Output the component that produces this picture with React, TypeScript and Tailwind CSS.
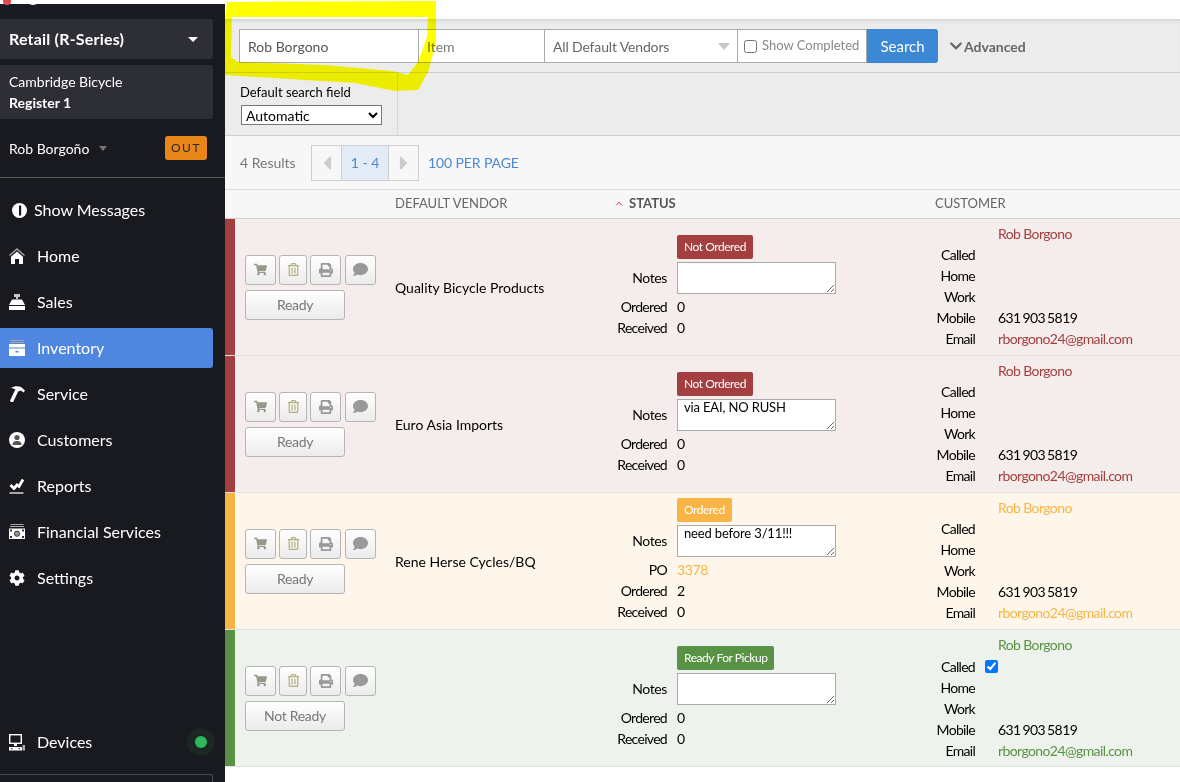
import type { ReactNode } from 'react';
import {
  FaCog, FaShoppingCart, FaRegTrashAlt, FaPrint, FaComment, FaChevronDown, FaCaretLeft, FaCaretRight,
} from 'react-icons/fa';

function HomeIcon() {
  return (
    <svg width="16" height="16" viewBox="0 0 16 16">
      <polyline points="0.5,7.5 8,1 15.5,7.5" fill="none" stroke="#a5a5a5" strokeWidth="1.4" />
      <path fill="#fff" d="M8 3.5 L14 8.8 V16 H10 V11 H6 V16 H2 V8.8 Z" />
    </svg>
  );
}

function SalesIcon() {
  return (
    <svg width="16" height="16" viewBox="0 0 16 16">
      <rect x="5" y="0" width="6" height="3" fill="#c8c8c8" />
      <rect x="7" y="3" width="2" height="2" fill="#c8c8c8" />
      <path fill="#fff" d="M3 5.5 H13 L16 11 H0 Z" />
      <rect x="0" y="12" width="16" height="4" fill="#fff" />
    </svg>
  );
}

function InventoryIcon() {
  return (
    <svg width="16" height="16" viewBox="0 0 16 16">
      <rect x="1.5" y="0" width="13" height="1" fill="#aaa" />
      <rect x="1" y="2" width="14" height="1" fill="#aaa" />
      <rect x="0" y="4" width="16" height="3.5" fill="#fff" />
      <rect x="0" y="8.5" width="16" height="7.5" fill="#fff" />
      <rect x="6.5" y="11" width="3" height="1.5" fill="#4f86e0" />
    </svg>
  );
}

function ServiceIcon() {
  return (
    <svg width="16" height="16" viewBox="0 0 16 16">
      <line x1="3" y1="14.5" x2="7.5" y2="5" stroke="#fff" strokeWidth="3.4" strokeLinecap="round" />
      <path fill="#fff" d="M2 2 C5 0 9 0 12 1 L16 4.5 L14.5 6.5 L12 4.5 L9 5.5 L6.5 3.5 C5 2.5 3.5 2 2 2 Z" />
    </svg>
  );
}

function CustomersIcon() {
  return (
    <svg width="16" height="16" viewBox="0 0 16 16">
      <circle cx="8" cy="8" r="8" fill="#fff" />
      <circle cx="8" cy="5.5" r="2.6" fill="#555" />
      <path fill="#555" d="M3.5 13 C3.5 9.5 6 9 8 9 S12.5 9.5 12.5 13 Z" />
    </svg>
  );
}

function ReportsIcon() {
  return (
    <svg width="16" height="16" viewBox="0 0 16 16">
      <polyline points="1.5,7 5,10.5 8,7 10,8.5 14,1.5" fill="none" stroke="#fff" strokeWidth="2.8" />
      <rect x="0.5" y="14" width="14" height="2" fill="#aaa" />
    </svg>
  );
}

function FinancialIcon() {
  return (
    <svg width="16" height="16" viewBox="0 0 16 16">
      <rect x="1.5" y="0" width="13" height="1" fill="#aaa" />
      <rect x="1" y="2" width="14" height="1" fill="#aaa" />
      <rect x="0" y="4.5" width="16" height="10.5" fill="#fff" />
      <circle cx="8" cy="9.7" r="2.6" fill="#999" stroke="#333" strokeWidth="1" />
      <rect x="1" y="5.5" width="2" height="2" fill="#333" />
      <rect x="13" y="5.5" width="2" height="2" fill="#333" />
      <rect x="1" y="12" width="2" height="2" fill="#333" />
      <rect x="13" y="12" width="2" height="2" fill="#333" />
    </svg>
  );
}

function DevicesIcon() {
  return (
    <svg width="16" height="17" viewBox="0 0 16 17">
      <rect x="0.7" y="0.7" width="11.6" height="8.6" fill="none" stroke="#fff" strokeWidth="1.4" />
      <rect x="5" y="10" width="3" height="2" fill="#fff" />
      <rect x="0" y="13" width="13" height="3.5" fill="#fff" />
      <rect x="2" y="14.2" width="1.5" height="1" fill="#191a1f" />
      <rect x="9.5" y="14.2" width="1.5" height="1" fill="#191a1f" />
      <rect x="13.5" y="11" width="2.5" height="5.5" fill="#aaa" />
    </svg>
  );
}

function MessageIcon() {
  return (
    <svg width="15" height="15" viewBox="0 0 15 15">
      <circle cx="7.5" cy="7.5" r="7.5" fill="#fff" />
      <rect x="7" y="2.5" width="2.2" height="10" fill="#191a1f" />
    </svg>
  );
}

const menu = [
  { label: 'Home', icon: <HomeIcon /> },
  { label: 'Sales', icon: <SalesIcon /> },
  { label: 'Inventory', icon: <InventoryIcon />, active: true },
  { label: 'Service', icon: <ServiceIcon /> },
  { label: 'Customers', icon: <CustomersIcon /> },
  { label: 'Reports', icon: <ReportsIcon /> },
  { label: 'Financial Services', icon: <FinancialIcon /> },
  { label: 'Settings', icon: <FaCog size={16} /> },
];

const rows = [
  {
    vendor: 'Quality Bicycle Products', status: 'Not Ordered', bar: 'bg-[#a43f3f]', bg: 'bg-[#f5ecec]',
    badge: 'bg-[#a43f3f]', link: 'text-[#a43f3f]', notes: '', ordered: '0', ready: 'Ready',
  },
  {
    vendor: 'Euro Asia Imports', status: 'Not Ordered', bar: 'bg-[#a43f3f]', bg: 'bg-[#f5ecec]',
    badge: 'bg-[#a43f3f]', link: 'text-[#a43f3f]', notes: 'via EAI, NO RUSH', ordered: '0', ready: 'Ready',
  },
  {
    vendor: 'Rene Herse Cycles/BQ', status: 'Ordered', bar: 'bg-[#f8b545]', bg: 'bg-[#fef6eb]',
    badge: 'bg-[#f8b545]', link: 'text-[#f8b545]', notes: 'need before 3/11!!!', po: '3378', ordered: '2', ready: 'Ready',
  },
  {
    vendor: '', status: 'Ready For Pickup', bar: 'bg-[#5a9245]', bg: 'bg-[#eef2ec]',
    badge: 'bg-[#5a9245]', link: 'text-[#5a9245]', notes: '', ordered: '0', ready: 'Not Ready', called: true,
  },
];

function IconButton({ width, children }: { width: string; children: ReactNode }) {
  return (
    <button className={`${width} h-[30px] flex items-center justify-center rounded-[3px] border border-[#b5b5b5] bg-gradient-to-b from-white to-[#ebebeb] text-[#999]`}>
      {children}
    </button>
  );
}

function Line({ label, width, gap, height = 'h-[21px]', children }: { label: string; width: string; gap: string; height?: string; children?: ReactNode }) {
  return (
    <div className={`flex items-center ${height} ${gap}`}>
      <span className={`${width} shrink-0 text-right text-black tracking-[-0.7px]`}>{label}</span>
      {children}
    </div>
  );
}

function Row({ row }: { row: (typeof rows)[number] }) {
  return (
    <div className={`flex h-[137px] border-b border-[#e2e0e0] ${row.bg}`}>
      <div className={`w-[10px] ${row.bar}`} />
      <div className="w-[160px] pl-[10px] flex flex-col justify-center gap-[5px]">
        <div className="flex gap-[3px]">
          <IconButton width="w-[31px]"><FaShoppingCart size={13} className="text-[#98988a]" /></IconButton>
          <IconButton width="w-[28px]"><FaRegTrashAlt size={13} className="text-[#b5b07c]" /></IconButton>
          <IconButton width="w-[31px]"><FaPrint size={14} /></IconButton>
          <IconButton width="w-[31px] ml-[1px]"><FaComment size={15} /></IconButton>
        </div>
        <button className="w-[100px] h-[30px] rounded-[3px] border border-[#b5b5b5] bg-gradient-to-b from-white to-[#ebebeb] text-[#777] tracking-[-0.3px]">
          {row.ready}
        </button>
      </div>
      <div className="w-[220px] flex items-center text-black">{row.vendor}</div>
      <div className={`w-[320px] flex flex-col ${row.po ? 'pt-[5px]' : 'pt-[16px]'}`}>
        <div className="pl-[62px] mb-[3px]">
          <span className={`inline-flex items-center h-[24px] px-[7px] rounded-[2px] text-white text-[12px] tracking-[-0.45px] ${row.badge}`}>{row.status}</span>
        </div>
        <div className="flex items-center gap-[10px] mb-[2px]">
          <span className="w-[52px] pb-[1px] text-right text-black tracking-[-0.4px]">Notes</span>
          <textarea
            readOnly
            value={row.notes}
            className="w-[159px] h-[32px] bg-white border border-[#aaa] px-[6px] py-0 text-[13px] leading-[14px] tracking-[-0.15px] text-black outline-none"
          />
        </div>
        {row.po && (
          <Line label="PO" width="w-[52px]" gap="gap-[10px]"><span className={`${row.link} tracking-[-0.4px]`}>{row.po}</span></Line>
        )}
        <Line label="Ordered" width="w-[52px]" gap="gap-[10px]"><span className="text-black">{row.ordered}</span></Line>
        <Line label="Received" width="w-[52px]" gap="gap-[10px]"><span className="text-black">0</span></Line>
      </div>
      <div className="flex-1 flex flex-col pt-[4px]">
        <div className={`pl-[63px] h-[21px] flex items-center tracking-[-0.6px] ${row.link}`}>Rob Borgono</div>
        <Line label="Called" width="w-[40px]" gap="gap-[10px]" height={row.called ? 'h-[22px]' : 'h-[21px]'}>
          {row.called && <input type="checkbox" readOnly checked className="w-[13px] h-[13px] accent-[#0075ff]" />}
        </Line>
        <Line label="Home" width="w-[40px]" gap="gap-[23px]" />
        <Line label="Work" width="w-[40px]" gap="gap-[23px]" />
        <Line label="Mobile" width="w-[40px]" gap="gap-[23px]"><span className="text-black tracking-[-0.6px] [word-spacing:-1px]">631 903 5819</span></Line>
        <Line label="Email" width="w-[40px]" gap="gap-[23px]"><span className={`${row.link} tracking-[-0.6px]`}>rborgono24@gmail.com</span></Line>
      </div>
    </div>
  );
}

function Sidebar() {
  return (
    <aside className="w-[225px] h-[782px] shrink-0 bg-[#191a1f] text-white flex flex-col overflow-hidden">
      <div className="h-[4px] bg-white shrink-0 relative">
        <svg className="absolute left-0 top-0" width="60" height="6">
          <ellipse cx="7" cy="1" rx="4" ry="4" fill="#e5484d" />
          <ellipse cx="33" cy="2" rx="4" ry="3" fill="#fff" />
        </svg>
      </div>
      <div className="h-[15px] shrink-0" />
      <div className="w-[213px] h-[40px] bg-[#2e2f36] rounded-r-[3px] flex items-center justify-between pl-[9px] pr-[15px] font-bold text-[16px] tracking-[0.2px]">
        Retail (R-Series)
        <span className="w-0 h-0 border-x-[5px] border-x-transparent border-t-[5px] border-t-white" />
      </div>
      <div className="w-[213px] h-[54px] mt-[6px] bg-[#2e2f36] rounded-r-[3px] pl-[9px] flex flex-col justify-center text-[14px] leading-[21px]">
        <span>Cambridge Bicycle</span>
        <span className="font-bold">Register 1</span>
      </div>
      <div className="flex items-center h-[59px] pl-[9px] pr-[18px] border-b border-[#55565a]">
        <span className="text-[14px]">Rob Borgoño</span>
        <span className="ml-[10px] w-0 h-0 border-x-[4px] border-x-transparent border-t-[5px] border-t-[#777]" />
        <span className="ml-auto w-[42px] h-[24px] flex items-center justify-center rounded-[3px] bg-[#e8861a] text-[#2b2b2b] text-[12px] tracking-[1.5px]">OUT</span>
      </div>
      <div className="flex items-center gap-[7px] h-[46px] mt-[9px] pl-[12px] text-[16px]">
        <MessageIcon />
        Show Messages
      </div>
      {menu.map((item) => (
        <div key={item.label} className="h-[46px] flex items-center">
          <div className={`w-[213px] h-[40px] flex items-center gap-[12px] pl-[9px] text-[16px] rounded-r-[3px] ${item.active ? 'bg-[#4f86e0]' : ''}`}>
            <span className="w-[16px] flex justify-center">{item.icon}</span>
            {item.label}
          </div>
        </div>
      ))}
      <div className="mt-auto flex items-center h-[46px] mb-[-3px] pl-[9px] pr-[10px] gap-[12px] text-[16px]">
        <span className="w-[16px] flex justify-center"><DevicesIcon /></span>
        Devices
        <span className="ml-auto w-[28px] h-[28px] rounded-full bg-[#1c2623] flex items-center justify-center">
          <span className="w-[12px] h-[12px] rounded-full bg-[#2eb85c]" />
        </span>
      </div>
      <div className="w-[213px] h-[8px] mt-[12px] border border-b-0 border-l-0 border-[#4a4d55] rounded-tr-[3px]" />
    </aside>
  );
}

export default function App() {
  return (
    <div className="w-[1180px] h-[782px] flex overflow-hidden bg-white text-[14px] relative" style={{ fontFamily: 'Lato, sans-serif' }}>
      <Sidebar />
      <main className="flex-1 min-w-0 flex flex-col">
        <div className="h-[19px] bg-white" />
        <div className="h-[54px] bg-[#ececec] border-b border-[#cfcfcf] flex items-start pt-[10px] pl-[14px] shadow-[inset_0_4px_4px_-3px_rgba(0,0,0,0.15)]">
          <input
            readOnly
            value="Rob Borgono"
            className="w-[180px] h-[34px] px-[8px] bg-white border border-[#aaa] text-[#555] outline-none"
          />
          <input
            readOnly
            placeholder="Item"
            className="w-[126px] h-[34px] px-[8px] bg-white border border-l-0 border-[#aaa] text-[#555] placeholder:text-[#777] outline-none"
          />
          <div className="w-[193px] h-[34px] pl-[8px] pr-[7px] bg-white border border-l-0 border-[#aaa] text-[#666] tracking-[-0.15px] flex items-center justify-between">
            All Default Vendors
            <span className="w-0 h-0 border-x-[6px] border-x-transparent border-t-[7px] border-t-[#c8c8c8]" />
          </div>
          <label className="w-[129px] h-[34px] pl-[6px] bg-white border border-l-0 border-[#aaa] text-[#888] text-[13px] flex items-center gap-[5px]">
            <input type="checkbox" readOnly className="w-[13px] h-[13px] m-0" />
            Show Completed
          </label>
          <button className="w-[71px] h-[34px] bg-[#3d88d5] text-white text-[15px] rounded-r-[3px]">Search</button>
          <span className="ml-[11px] h-[34px] flex items-center gap-[1px] text-[#666] font-bold">
            <FaChevronDown size={14} />
            Advanced
          </span>
        </div>
        <div className="h-[63px] bg-[#ececec] border-b border-[#cfcfcf]">
          <div className="w-[173px] h-full border-r border-[#d8d8d8] pl-[15px] pt-[11px] text-black">
            <div className="leading-[17px] text-[13px]">Default search field</div>
            <select className="mt-[4px] ml-[1px] w-[141px] h-[20px] bg-white border border-[#777] text-[14px] leading-[16px] rounded-none">
              <option>Automatic</option>
            </select>
          </div>
        </div>
        <div className="h-[54px] bg-[#f7f7f7] border-b border-[#dcdcdc] flex items-center pl-[15px]">
          <span className="text-[#777] w-[71px]">4 Results</span>
          <div className="flex h-[36px] border border-[#cfcfcf] text-[#4a8ad4]">
            <span className="w-[30px] flex items-center justify-center border-r border-[#cfcfcf] text-[#ccc]"><FaCaretLeft size={22} /></span>
            <span className="w-[47px] flex items-center justify-center bg-[#e3ecf6] border-r border-[#cfcfcf]">1 - 4</span>
            <span className="w-[29px] flex items-center justify-center text-[#ccc]"><FaCaretRight size={22} /></span>
          </div>
          <span className="ml-[9px] text-[#4a8ad4] tracking-[-0.1px]">100 PER PAGE</span>
        </div>
        <div className="h-[29px] pb-[1px] bg-[#f7f7f7] border-b border-[#cfcfcf] flex items-center text-[13px] text-[#666]">
          <span className="w-[170px]" />
          <span className="w-[220px]">DEFAULT VENDOR</span>
          <span className="w-[320px] flex items-center gap-[6px] font-bold text-[#555]">
            <svg width="8" height="5" viewBox="0 0 8 5"><polyline points="1,4.5 4,1 7,4.5" fill="none" stroke="#e8485a" strokeWidth="1" /></svg>
            STATUS
          </span>
          <span>CUSTOMER</span>
        </div>
        {rows.map((row, i) => (
          <Row key={i} row={row} />
        ))}
      </main>
      <svg className="absolute left-0 top-0 pointer-events-none mix-blend-multiply" width="1180" height="100">
        <path
          fill="#ffff00"
          fillRule="evenodd"
          d="M227 2 L436 1 L436 43 L428 72 L418 90 L395 91 L355 83 L305 80 L225 75 L225 20 Z M232 17 L428 17 L427 37 L418 62 L408 75 L392 71 L325 65 L238 62 L231 57 Z"
        />
      </svg>
    </div>
  );
}
